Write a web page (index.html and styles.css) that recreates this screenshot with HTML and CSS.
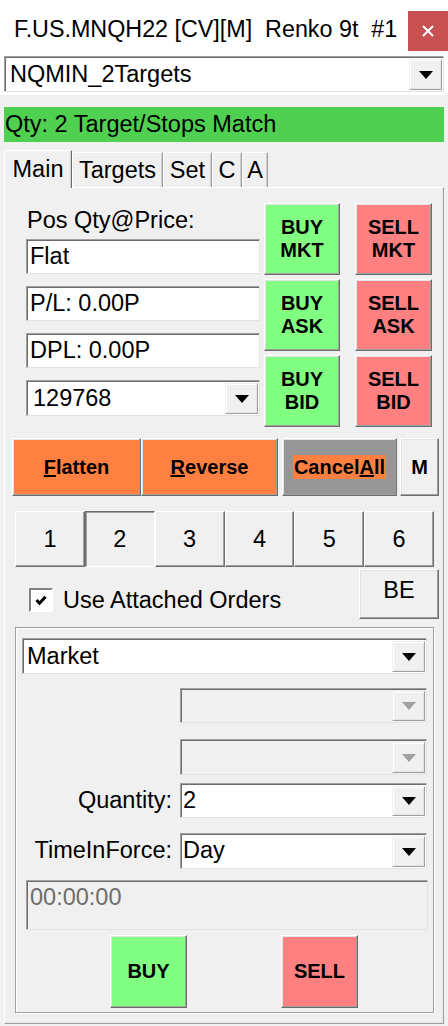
FILE: index.html
```html
<!DOCTYPE html>
<html>
  <head>
    <meta charset="UTF-8">
    <title>Order Entry</title>
    <link rel="stylesheet" href="styles.css">
  </head>
  <body>
    <div class="window">
      <div class="head">
        <div class="titlebar">
          <span class="title">F.US.MNQH22 [CV][M]  Renko 9t  #1</span>
          <span class="close">
            <svg width="12" height="12" viewBox="0 0 12 12"><path d="M1 1 L11 11 M11 1 L1 11" stroke="#fff" stroke-width="2"/></svg>
          </span>
        </div>
        <div class="combo strategy">
          <span class="combo-text">NQMIN_2Targets</span>
          <span class="combo-btn"><i class="tri"></i></span>
        </div>
      </div>

      <div class="status">Qty: 2 Target/Stops Match</div>

      <div class="tabs">
        <span class="tab selected">Main</span>
        <span class="tab w-targets">Targets</span>
        <span class="tab w-set">Set</span>
        <span class="tab w-c">C</span>
        <span class="tab w-a">A</span>
      </div>

      <div class="panel">
        <div class="order-block">
          <div class="pos-col">
            <div class="pos-label">Pos Qty@Price:</div>
            <div class="field">Flat</div>
            <div class="field">P/L: 0.00P</div>
            <div class="field">DPL: 0.00P</div>
            <div class="combo acct">
              <span class="combo-text">129768</span>
              <span class="combo-btn"><i class="tri"></i></span>
            </div>
          </div>
          <div class="quick-grid">
            <button class="btn buy">BUY<br>MKT</button>
            <button class="btn sell">SELL<br>MKT</button>
            <button class="btn buy">BUY<br>ASK</button>
            <button class="btn sell">SELL<br>ASK</button>
            <button class="btn buy">BUY<br>BID</button>
            <button class="btn sell">SELL<br>BID</button>
          </div>
        </div>

        <div class="actions">
          <button class="btn flat-btn"><u>F</u>latten</button>
          <button class="btn rev-btn"><u>R</u>everse</button>
          <button class="btn cancel-btn"><span class="hl">Cancel<u>A</u>ll</span></button>
          <button class="btn m-btn">M</button>
        </div>

        <div class="slots">
          <span class="slot">1</span>
          <span class="slot pressed">2</span>
          <span class="slot">3</span>
          <span class="slot">4</span>
          <span class="slot">5</span>
          <span class="slot">6</span>
        </div>

        <div class="attach-row">
          <label class="check">
            <span class="box">
              <svg width="12" height="11" viewBox="0 0 12 11"><path d="M1.5 5 L4.5 8.2 L10.5 1.8" fill="none" stroke="#000" stroke-width="3"/></svg>
            </span>
            Use Attached Orders
          </label>
          <button class="btn be-btn">BE</button>
        </div>

        <div class="group">
          <div class="combo market">
            <span class="combo-text">Market</span>
            <span class="combo-btn"><i class="tri"></i></span>
          </div>

          <div class="form-row r-dis1">
            <span class="lbl"></span>
            <div class="combo disabled">
              <span class="combo-text"></span>
              <span class="combo-btn"><i class="tri"></i></span>
            </div>
          </div>
          <div class="form-row r-dis2">
            <span class="lbl"></span>
            <div class="combo disabled">
              <span class="combo-text"></span>
              <span class="combo-btn"><i class="tri"></i></span>
            </div>
          </div>
          <div class="form-row r-qty">
            <span class="lbl">Quantity:</span>
            <div class="combo">
              <span class="combo-text">2</span>
              <span class="combo-btn"><i class="tri"></i></span>
            </div>
          </div>
          <div class="form-row r-tif">
            <span class="lbl">TimeInForce:</span>
            <div class="combo">
              <span class="combo-text">Day</span>
              <span class="combo-btn"><i class="tri"></i></span>
            </div>
          </div>

          <div class="time-box">00:00:00</div>

          <div class="submit-row">
            <button class="btn buy submit">BUY</button>
            <button class="btn sell submit">SELL</button>
          </div>
        </div>
      </div>
    </div>
  </body>
</html>
```

FILE: styles.css
```css
body {
  margin: 0;
  background: #f0f0f0;
  font-family: "Liberation Sans", Arial, sans-serif;
  font-size: 23.5px;
  color: #000;
}
.window {
  width: 448px;
  height: 1026px;
  overflow: hidden;
}

/* header */
.head {
  background: #fff;
  padding-bottom: 3px;
}
.titlebar {
  height: 52px;
  display: flex;
  align-items: flex-start;
}
.title {
  white-space: pre;
  font-size: 23.3px;
  line-height: 27px;
  padding: 16px 0 0 14px;
  flex: 1;
}
.close {
  width: 40px;
  height: 40px;
  margin-top: 11px;
  background: #c75050;
  display: flex;
  align-items: center;
  justify-content: center;
}

/* combo boxes */
.combo {
  display: flex;
  box-sizing: border-box;
  height: 36px;
  background: #fff;
  border: 1px solid;
  border-color: #a0a0a0 #e3e3e3 #e3e3e3 #a0a0a0;
  box-shadow: inset 1px 1px #6d6d6d;
}
.combo-text {
  flex: 1;
  padding: 0 0 0 4px;
  line-height: 34px;
  white-space: nowrap;
}
.combo-btn {
  width: 33px;
  margin: 2px 1px 1px 0;
  box-sizing: border-box;
  background: #f0f0f0;
  border: 1px solid;
  border-color: #f0f0f0 #a0a0a0 #a0a0a0 #f0f0f0;
  box-shadow: inset 1px 1px #fff, inset -1px -1px #e3e3e3;
  display: flex;
  align-items: center;
  justify-content: center;
}
.tri {
  width: 0;
  height: 0;
  border-left: 7px solid transparent;
  border-right: 7px solid transparent;
  border-top: 8px solid #000;
}
.combo.disabled {
  background: #f0f0f0;
}
.combo.disabled .tri {
  border-top-color: #a0a0a0;
}
.strategy {
  margin: 4px 4px 0;
}
.strategy .combo-text {
  padding-left: 5px;
}

/* status line */
.status {
  margin: 12px 4px 0;
  height: 35px;
  line-height: 35px;
  background: #50d050;
  padding-left: 1px;
  white-space: nowrap;
}

/* page tabs */
.tabs {
  display: flex;
  align-items: flex-end;
  margin: 8px 0 0 4px;
  height: 37px;
  position: relative;
  z-index: 1;
}
.tab {
  box-sizing: border-box;
  height: 35px;
  line-height: 34px;
  text-align: center;
  font-size: 23.5px;
  border: 1px solid;
  border-bottom: none;
  border-color: #fff #a0a0a0 #a0a0a0 #fff;
  box-shadow: inset -1px 0 #d0d0d0;
}
.tab.selected {
  width: 68px;
  height: 38px;
  margin-bottom: -1px;
  line-height: 36px;
  background: #f0f0f0;
  border-right-color: #6d6d6d;
}
.w-targets { width: 91px; }
.w-set { width: 49px; }
.w-c { width: 30px; }
.w-a { width: 26px; }

.panel {
  box-sizing: border-box;
  width: 440px;
  height: 837px;
  margin-left: 4px;
  border: 1px solid;
  border-color: #fff #a0a0a0 #a0a0a0 #fff;
  box-shadow: inset -1px -1px #e3e3e3;
  padding-top: 15px;
}

/* 3d buttons */
.btn {
  box-sizing: border-box;
  margin: 0;
  padding: 0;
  font-family: inherit;
  font-size: 20px;
  font-weight: bold;
  line-height: 23px;
  color: #000;
  background: #f0f0f0;
  border: 1px solid;
  border-color: #fff #6d6d6d #6d6d6d #fff;
  box-shadow: inset -1px -1px #a0a0a0, inset 1px 1px #e3e3e3;
}
.btn.buy { background: #80ff80; }
.btn.sell { background: #ff8080; }

/* position + quick order buttons */
.order-block {
  display: flex;
  gap: 4px;
}
.pos-col {
  width: 234px;
  margin-left: 21px;
  display: flex;
  flex-direction: column;
}
.pos-label {
  margin-top: 4px;
  height: 27px;
  line-height: 27px;
  margin-bottom: 5px;
  padding-left: 1px;
}
.field {
  box-sizing: border-box;
  height: 35px;
  line-height: 33px;
  margin-bottom: 12px;
  padding-left: 3px;
  background: #fff;
  border: 1px solid;
  border-color: #a0a0a0 #e3e3e3 #e3e3e3 #a0a0a0;
  box-shadow: inset 1px 1px #6d6d6d;
}
.acct {
  height: 36px;
}
.acct .combo-text {
  padding-left: 6px;
}
.quick-grid {
  display: grid;
  grid-template-columns: 76px 77px;
  grid-auto-rows: 72px;
  column-gap: 15px;
  row-gap: 4px;
}

/* flatten / reverse / cancel */
.actions {
  display: flex;
  margin: 11px 0 0 7px;
  height: 58px;
}
.actions .btn {
  height: 58px;
}
.flat-btn { width: 129px; background: #ff8040; }
.rev-btn { width: 137px; background: #ff8040; }
.cancel-btn { width: 115px; margin-left: 4px; background: #969696; }
.m-btn { width: 39px; margin-left: 3px; }
.hl {
  background: #ff8040;
  display: inline-block;
  line-height: 24px;
  padding: 0 1px;
}

/* numbered slots */
.slots {
  display: grid;
  grid-template-columns: repeat(6, 1fr);
  width: 419px;
  height: 50px;
  margin: 15px 0 0 10px;
}
.slot {
  box-sizing: border-box;
  text-align: center;
  line-height: 54px;
  border: 1px solid;
  border-color: #fff #6d6d6d #6d6d6d #fff;
  box-shadow: inset -1px -1px #a0a0a0;
}
.slot.pressed {
  border-color: #6d6d6d #fff #fff #6d6d6d;
  box-shadow: inset 1px 1px #a0a0a0;
}

/* attach checkbox */
.attach-row {
  display: flex;
  margin-top: 8px;
  height: 50px;
}
.check {
  display: flex;
  align-items: center;
  margin: 19px 0 0 24px;
  height: 24px;
  white-space: nowrap;
}
.box {
  box-sizing: border-box;
  width: 24px;
  height: 24px;
  margin-right: 10px;
  background: #fff;
  border: 2px solid;
  border-color: #808080 #fff #fff #808080;
  display: flex;
  align-items: center;
  justify-content: center;
}
.be-btn {
  width: 80px;
  height: 50px;
  margin-left: auto;
  margin-right: 4px;
  font-weight: normal;
  font-size: 23.5px;
  line-height: 40px;
  padding-bottom: 10px;
}

/* attached order group */
.group {
  box-sizing: border-box;
  width: 419px;
  height: 386px;
  margin: 8px 0 0 10px;
  border: 1px solid #a0a0a0;
  box-shadow: inset 1px 1px #fff, 1px 1px #fff;
}
.market {
  margin: 10px 6px 0;
}
.form-row {
  display: grid;
  grid-template-columns: 1fr 247px;
  column-gap: 8px;
  padding-right: 6px;
}
.form-row .combo {
  height: 35px;
}
.form-row .combo-text {
  padding-left: 2px;
  line-height: 33px;
}
.lbl {
  text-align: right;
  line-height: 35px;
  white-space: nowrap;
}
.r-dis1 { margin-top: 14px; }
.r-dis2 { margin-top: 16px; }
.r-qty { margin-top: 8px; }
.r-tif { margin-top: 15px; }
.r-dis2 .combo,
.r-tif .combo {
  height: 36px;
}
.time-box {
  box-sizing: border-box;
  height: 50px;
  margin: 11px 5px 0 10px;
  padding: 1px 0 0 3px;
  line-height: 30px;
  color: #6d6d6d;
  border: 1px solid;
  border-color: #a0a0a0 #e3e3e3 #e3e3e3 #a0a0a0;
  box-shadow: inset 1px 1px #6d6d6d;
}
.submit-row {
  display: flex;
  margin-top: 5px;
}
.submit {
  width: 77px;
  height: 73px;
}
.submit.buy { margin-left: 94px; }
.submit.sell { margin-left: 94px; }
```
